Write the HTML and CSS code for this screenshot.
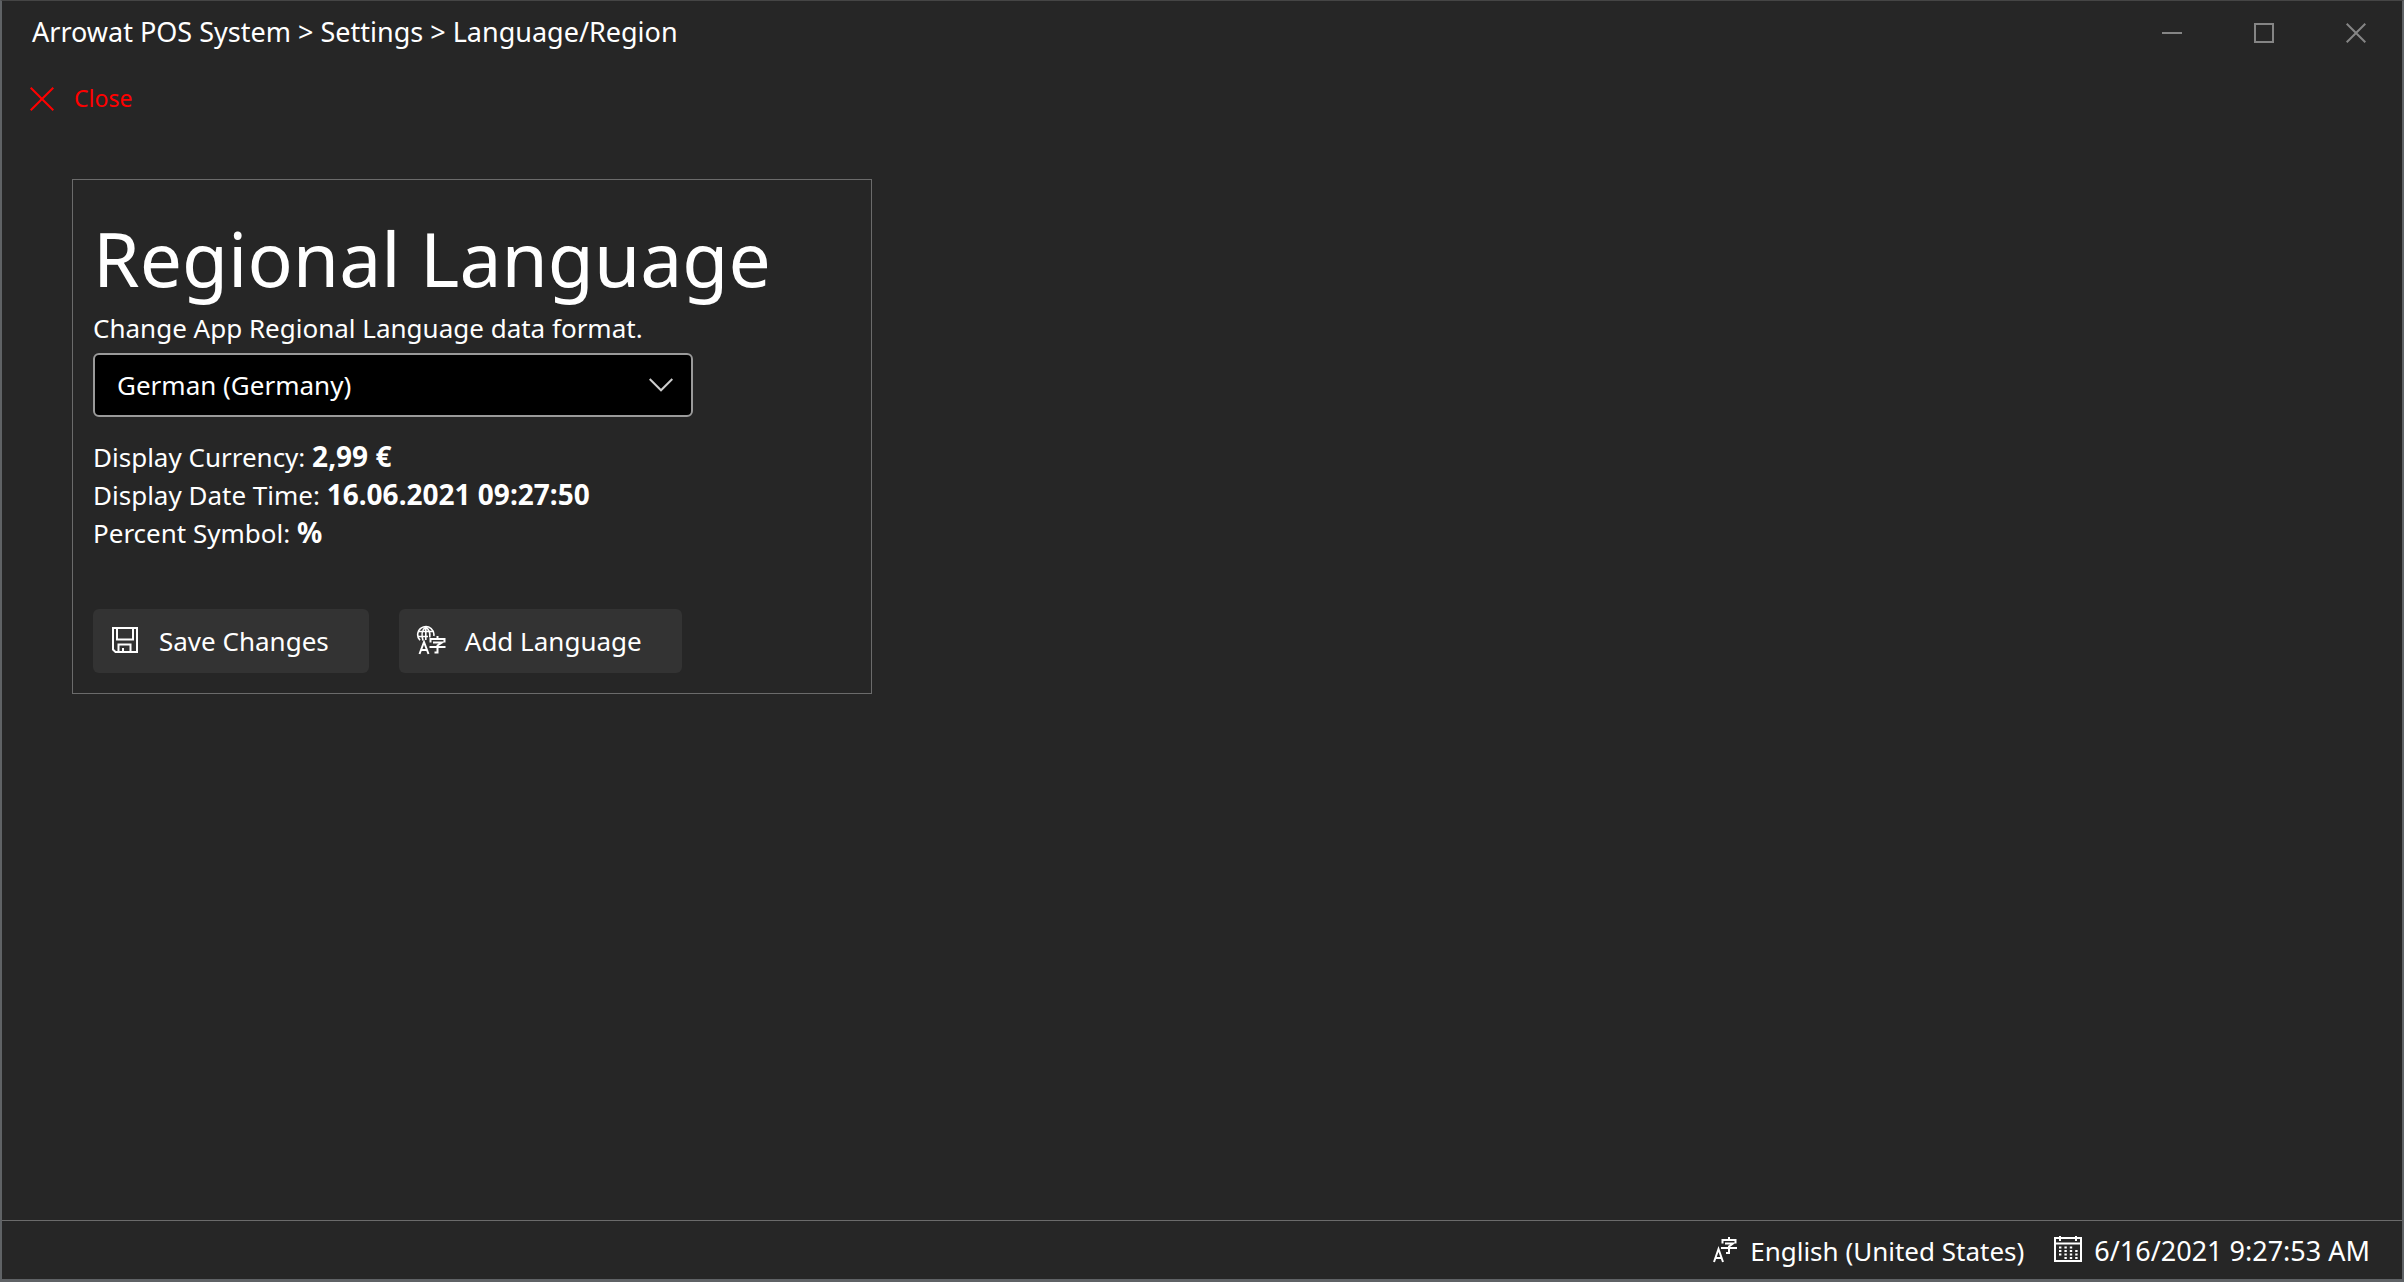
FILE: index.html
```
<!DOCTYPE html>
<html lang="en">
<head>
<meta charset="utf-8">
<title>Arrowat POS System</title>
<meta name="viewport" content="width=device-width, initial-scale=1">
<link rel="stylesheet" href="styles.css">
</head>
<body>
<div class="window">
  <header class="titlebar">
    <div class="breadcrumb">Arrowat POS System &gt; Settings &gt; Language/Region</div>
    <div class="window-controls">
      <button class="window-button" type="button" aria-label="Minimize">
        <svg width="20" height="20" viewBox="0 0 20 20"><path d="M0 10H20"/></svg>
      </button>
      <button class="window-button" type="button" aria-label="Maximize">
        <svg width="20" height="20" viewBox="0 0 20 20"><path d="M1 1H19V19H1Z"/></svg>
      </button>
      <button class="window-button" type="button" aria-label="Close window">
        <svg width="20" height="20" viewBox="0 0 20 20"><path d="M.7 .7L19.3 19.3M19.3 .7L.7 19.3"/></svg>
      </button>
    </div>
  </header>

  <nav class="toolbar">
    <button class="close-button" type="button">
      <svg width="24" height="24" viewBox="0 0 24 24"><path d="M.7 .7L23.3 23.3M23.3 .7L.7 23.3"/></svg>
      <span class="close-text">Close</span>
    </button>
  </nav>

  <main class="content">
    <section class="card">
      <h1 class="card-title">Regional Language</h1>
      <label class="card-label" for="language">Change App Regional Language data format.</label>
      <div class="select">
        <select class="select-input" id="language">
          <option>German (Germany)</option>
          <option>English (United States)</option>
        </select>
        <svg class="select-arrow" width="24" height="14" viewBox="0 0 24 14"><path d="M.7 1L12 12.3L23.3 1"/></svg>
      </div>
      <div class="formats">
        <p>Display Currency: <b>2,99 €</b></p>
        <p>Display Date Time: <b>16.06.2021 09:27:50</b></p>
        <p>Percent Symbol: <b>%</b></p>
      </div>
      <div class="actions">
        <button class="action" type="button">
          <svg width="32" height="32" viewBox="0 0 32 32">
            <path d="M4 3H28V27H6.500L4 24.500Z"/>
            <path d="M8 3V14.500H24V3"/>
            <path d="M9.500 27V19.500H21.500V27M14 27V23"/>
          </svg>
          <span>Save Changes</span>
        </button>
        <button class="action" type="button">
          <svg width="32" height="32" viewBox="0 0 32 32">
            <g stroke-width="1.600">
              <path d="M18.800 11A8.100 8.100 0 1 0 5 15.300"/>
              <path d="M10.800 2C6.500 5 6.500 11 8 15.500M10.800 2C15 5 15.200 9 14.800 12.500M10.800 2V15M3.500 6.500H18M3 11.500H13"/>
            </g>
            <path d="M4.500 29L9 17L13.500 29M6 25H12"/>
            <path d="M22.500 11V14M15.500 17.500V14H29.500V17.500M18 17.500H27L22.500 20.500V27.500H19.500M14.500 22H30.500"/>
          </svg>
          <span>Add Language</span>
        </button>
      </div>
    </section>
  </main>

  <footer class="statusbar">
    <div class="status">
      <svg width="26" height="28" viewBox="0 0 26 28">
        <path d="M2 26L6.500 13L11 26M3.500 22H9.500"/>
        <path d="M17 1V4M10.500 7.500V4H23.500V7.500M13 7.500H21L17 10.500V17H14M9 12H25"/>
      </svg>
      <span class="status-text">English (United States)</span>
    </div>
    <div class="status">
      <svg width="28" height="28" viewBox="0 0 28 28">
        <path d="M1 2H27V25H1ZM1 7.500H27M6 0V5M22 0V5"/>
        <path stroke-dasharray="2.400 3" d="M5 11.500H19M5 15H24M5 18.500H24M10.400 22H24"/>
      </svg>
      <time class="status-text status-time" datetime="2021-06-16T09:27:53">6/16/2021 9:27:53 AM</time>
    </div>
  </footer>
</div>
</body>
</html>
```
FILE: styles.css
```
* {
  box-sizing: border-box;
}

body {
  margin: 0;
  background: #262626;
  color: #fff;
  font: 26px/38px "Noto Sans", "Open Sans", sans-serif;
}

button,
select {
  margin: 0;
  border: 0;
  background: none;
  color: inherit;
  font: inherit;
}

svg {
  flex: none;
  fill: none;
  stroke: currentColor;
  stroke-width: 2;
}

.window {
  display: flex;
  flex-direction: column;
  min-height: 100vh;
  border: 2px solid #5f6265;
  border-top: 1px solid #454545;
  border-bottom-width: 3px;
}

.titlebar {
  display: flex;
  justify-content: space-between;
  align-items: center;
  height: 64px;
  padding-left: 30px;
}

.breadcrumb {
  padding-bottom: 2px;
  font-size: 27px;
}

.window-controls {
  display: flex;
}

.window-button {
  display: flex;
  justify-content: center;
  align-items: center;
  width: 92px;
  height: 64px;
  padding: 0;
  color: #858585;
}

.toolbar {
  display: flex;
  height: 68px;
  padding-left: 28px;
}

.close-button {
  display: flex;
  align-items: center;
  gap: 20px;
  padding: 0;
  color: #f00;
  font-size: 23px;
}

.close-text {
  padding-bottom: 2px;
}

.content {
  flex: 1;
  padding: 46px 70px;
}

.card {
  width: 800px;
  max-width: 100%;
  padding: 28px 20px 20px;
  border: 1px solid #6b6b6b;
}

.card-title {
  margin: 0;
  font-size: 75px;
  font-weight: 400;
  line-height: 101px;
}

.card-label {
  display: block;
  margin-bottom: 6px;
}

.select {
  display: grid;
  align-items: center;
  width: 600px;
  max-width: 100%;
}

.select-input {
  grid-area: 1 / 1;
  height: 64px;
  padding: 0 60px 0 22px;
  border: 2px solid #9a9a9a;
  border-radius: 6px;
  background: #000;
  appearance: none;
}

.select-arrow {
  grid-area: 1 / 1;
  justify-self: end;
  margin-right: 20px;
  color: #ccc;
  pointer-events: none;
}

.formats {
  margin: 21px 0 57px;
}

.formats p {
  margin: 0;
}

.formats b {
  font-size: 28px;
  line-height: 1;
}

.actions {
  display: flex;
  gap: 30px;
}

.action {
  display: flex;
  align-items: center;
  gap: 18px;
  height: 64px;
  padding: 0 40px 0 16px;
  border-radius: 6px;
  background: #333;
}

.statusbar {
  display: flex;
  justify-content: flex-end;
  align-items: center;
  gap: 30px;
  height: 59px;
  padding-right: 32px;
  border-top: 1px solid #6b6b6b;
}

.status {
  display: flex;
  align-items: center;
  gap: 12px;
}

.status-text {
  padding-top: 2px;
}

.status-time {
  font-size: 27px;
}
```
